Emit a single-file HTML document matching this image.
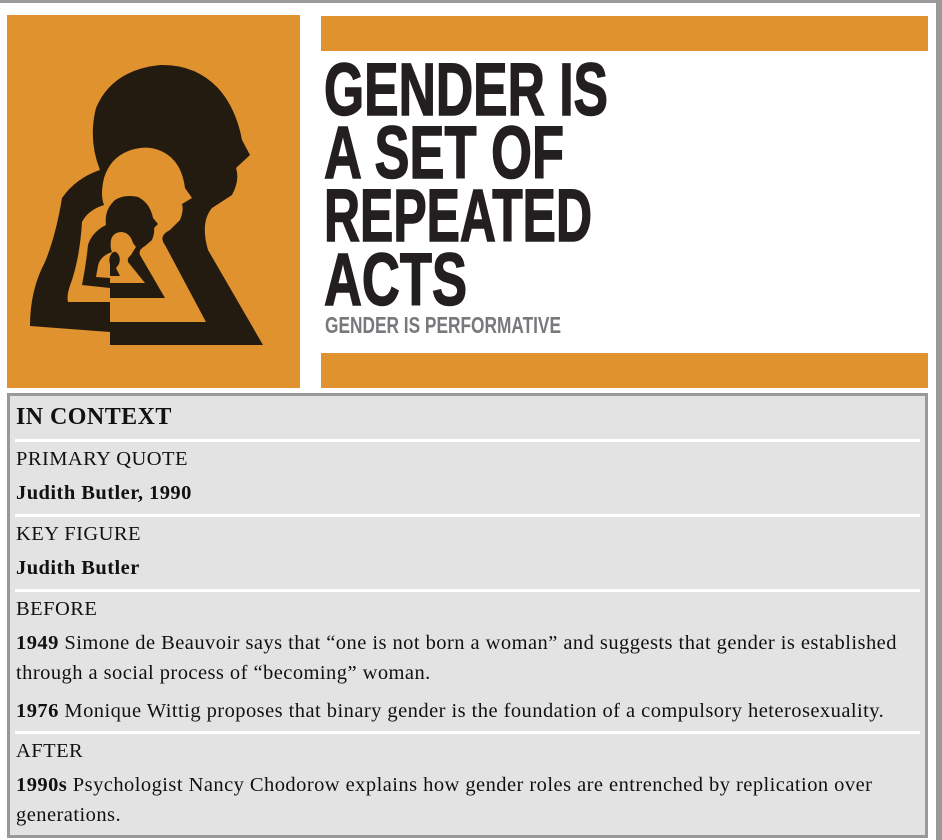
<!DOCTYPE html>
<html><head><meta charset="utf-8"><style>
body{margin:0;width:942px;height:840px;background:#fff;position:relative;overflow:hidden;font-family:"Liberation Serif",serif;color:#111}
.top{position:absolute;left:0;top:0;width:942px;height:3px;background:#9a9a9a}
.right{position:absolute;left:936px;top:0;width:6px;height:840px;background:#9a9a9a}
.box{position:absolute;left:7px;top:393px;width:915px;height:439px;border:3px solid #999;background:#e3e3e3}
.sep{position:absolute;left:5px;width:905px;height:3px;background:#fff}
.t{position:absolute;left:6px;font-size:20.5px;letter-spacing:0.45px;white-space:nowrap;line-height:30px}
</style></head><body>
<div class="top"></div><div class="right"></div>
<svg style="position:absolute;left:0;top:0" width="936" height="392">
<rect x="7" y="15" width="293" height="373" fill="#df922e"/>
<rect x="321" y="16" width="607" height="35" fill="#df922e"/>
<rect x="321" y="353" width="607" height="35" fill="#df922e"/>
<g fill="#231a10">
<path d="M110 345 L263 345 L208 250 Q200 222 212 208 L232 195 Q240 180 236 168 L250 155 L242 140 Q236 108 218 88 Q195 64 160 65 Q112 70 96 108 Q88 140 100 170 Q76 178 62 198 Q56 235 45 262 Q30 290 30 326 L110 332 Z"/>
</g>
<g fill="#df922e">
<path d="M110 322 L206 322 L165 245 Q158 236 170 230 L180 220 Q184 210 182 204 L192 198 L185 188 Q182 165 168 155 Q155 146 140 148 Q112 152 104 178 Q100 195 104 205 Q88 210 82 222 Q80 255 72 280 Q66 295 68 302 L110 302 Z"/>
</g>
<g fill="#231a10">
<path d="M110 298 L165 298 L140 255 Q138 250 145 246 L152 240 Q155 232 154 228 L158 224 L153 218 Q150 203 138 197 Q125 194 115 200 Q104 210 106 225 Q92 232 88 245 Q86 265 82 285 L110 288 Z"/>
</g>
<g fill="#df922e">
<path d="M110 283 L145 283 L128 262 Q127 258 131 255 L134 250 L136 247 L133 243 Q130 233 122 232 Q113 232 111 240 Q110 248 112 252 Q100 256 98 266 L96 277 L110 278 Z"/>
</g>
<g fill="#231a10">
<path d="M110 276 L120 276 L116 268 L119 264 Q121 258 118 254 Q115 250 112 253 Q108 258 110 264 Z"/>
</g>
<g font-family="Liberation Sans Narrow, Liberation Sans, sans-serif" font-weight="bold" fill="#231f20" stroke="#231f20" stroke-width="1.5">
<text x="324" y="115" font-size="74" textLength="284" lengthAdjust="spacingAndGlyphs">GENDER IS</text>
<text x="324" y="178" font-size="74" textLength="240" lengthAdjust="spacingAndGlyphs">A SET OF</text>
<text x="324" y="241" font-size="74" textLength="268" lengthAdjust="spacingAndGlyphs">REPEATED</text>
<text x="324" y="305" font-size="74" textLength="143" lengthAdjust="spacingAndGlyphs">ACTS</text>
</g>
<text x="325" y="333" font-family="Liberation Sans Narrow, Liberation Sans, sans-serif" font-weight="bold" font-size="23" fill="#78787d" textLength="236" lengthAdjust="spacingAndGlyphs">GENDER IS PERFORMATIVE</text>
</svg>
<div class="box">
<div class="t" style="top:6px;font-size:24px;font-weight:bold">IN CONTEXT</div>
<div class="sep" style="top:43px"></div>
<div class="t" style="top:48px">PRIMARY QUOTE</div>
<div class="t" style="top:82px;font-weight:bold">Judith Butler, 1990</div>
<div class="sep" style="top:118px"></div>
<div class="t" style="top:123px">KEY FIGURE</div>
<div class="t" style="top:157px;font-weight:bold">Judith Butler</div>
<div class="sep" style="top:193px"></div>
<div class="t" style="top:198px">BEFORE</div>
<div class="t" style="top:232px"><b>1949</b> Simone de Beauvoir says that “one is not born a woman” and suggests that gender is established</div>
<div class="t" style="top:262px">through a social process of “becoming” woman.</div>
<div class="t" style="top:300px"><b>1976</b> Monique Wittig proposes that binary gender is the foundation of a compulsory heterosexuality.</div>
<div class="sep" style="top:335px"></div>
<div class="t" style="top:340px">AFTER</div>
<div class="t" style="top:374px"><b>1990s</b> Psychologist Nancy Chodorow explains how gender roles are entrenched by replication over</div>
<div class="t" style="top:404px">generations.</div>
</div>
</body></html>
